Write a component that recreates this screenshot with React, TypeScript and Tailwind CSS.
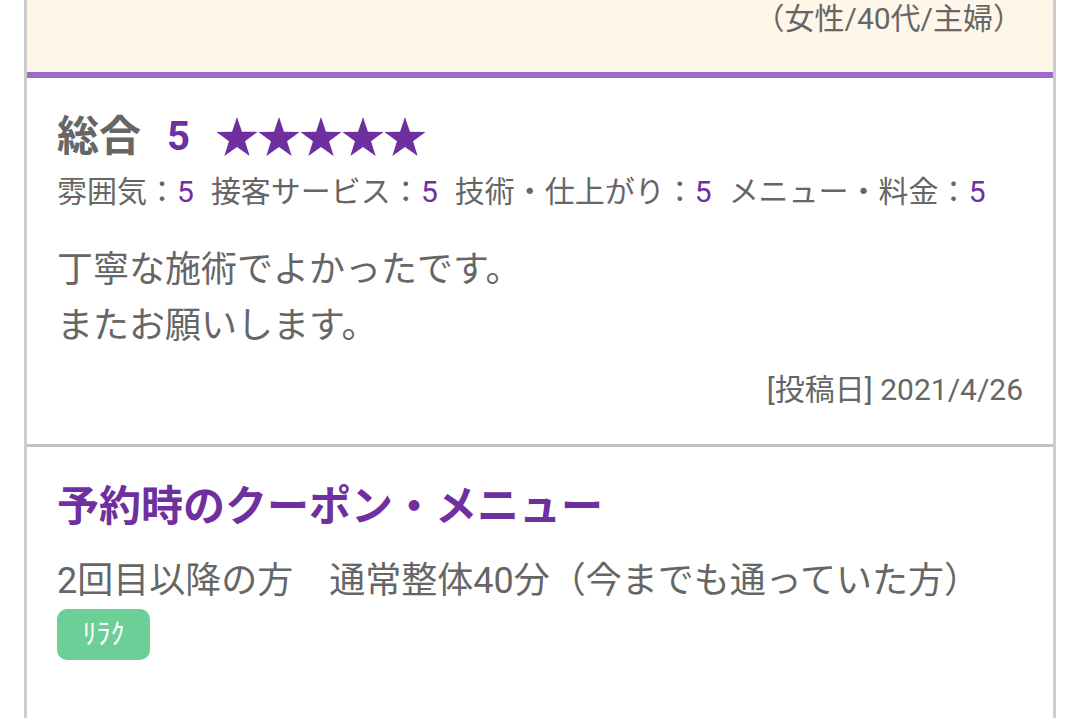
import React from "react";

const Star = () => (
  <svg width="42" height="40" viewBox="0 0 100 95" className="block">
    <polygon
      points="50,0 61.8,35.1 98.9,35.3 69.1,57.4 80.2,92.7 50,71.3 19.8,92.7 30.9,57.4 1.1,35.3 38.2,35.1"
      fill="#6f2f9f"
    />
  </svg>
);

const items = [
  { label: "雰囲気：", v: "5" },
  { label: "接客サービス：", v: "5" },
  { label: "技術・仕上がり：", v: "5" },
  { label: "メニュー・料金：", v: "5" },
];

export default function App() {
  return (
    <div
      className="w-[1080px] h-[718px] overflow-hidden bg-white"
      style={{ fontFamily: 'Roboto, "Noto Sans CJK JP", sans-serif' }}
    >
      <div className="ml-[24px] w-[1032px] h-[718px] border-x-[3px] border-[#cccccc]">
        <div className="h-[72px] bg-[#fef6e8] px-[30px] flex justify-end">
          <div className="text-[30px] leading-[38px] text-[#666666]">（女性/40代/主婦）</div>
        </div>
        <div className="h-[6px] bg-[#9a6bc8]" />
        <div className="px-[30px] pt-[34px] pb-[34px] border-b-[3px] border-[#c8c4bd]">
          <div className="flex items-center h-[50px]">
            <span className="text-[42px] font-bold text-[#666666] leading-[50px]">総合</span>
            <span className="ml-[26px] text-[40px] font-bold text-[#6f2f9f] leading-[50px]">5</span>
            <div className="ml-[26px] flex">
              <Star />
              <Star />
              <Star />
              <Star />
              <Star />
            </div>
          </div>
          <div className="mt-[10px] flex text-[30px] leading-[40px] text-[#666666]">
            {items.map((it, i) => (
              <span key={i} className="mr-[17px] whitespace-nowrap">
                {it.label}
                <span className="text-[#6f2f9f]">{it.v}</span>
              </span>
            ))}
          </div>
          <div className="mt-[30px] text-[36px] leading-[56px] text-[#666666]">
            <div>丁寧な施術でよかったです。</div>
            <div>またお願いします。</div>
          </div>
          <div className="mt-[16px] text-right text-[30px] leading-[40px] text-[#666666]">
            [投稿日] 2021/4/26
          </div>
        </div>
        <div className="px-[30px] pt-[35px]">
          <div className="text-[42px] font-bold leading-[50px] text-[#6f2f9f]">
            予約時のクーポン・メニュー
          </div>
          <div className="mt-[27px] text-[36px] leading-[44px] text-[#666666] whitespace-nowrap">
            2回目以降の方　通常整体40分（今までも通っていた方）
          </div>
          <div className="mt-[6px] inline-flex items-center justify-center h-[51px] w-[93px] rounded-[10px] bg-[#6ccf98] text-white text-[28px]">
            ﾘﾗｸ
          </div>
        </div>
      </div>
    </div>
  );
}
